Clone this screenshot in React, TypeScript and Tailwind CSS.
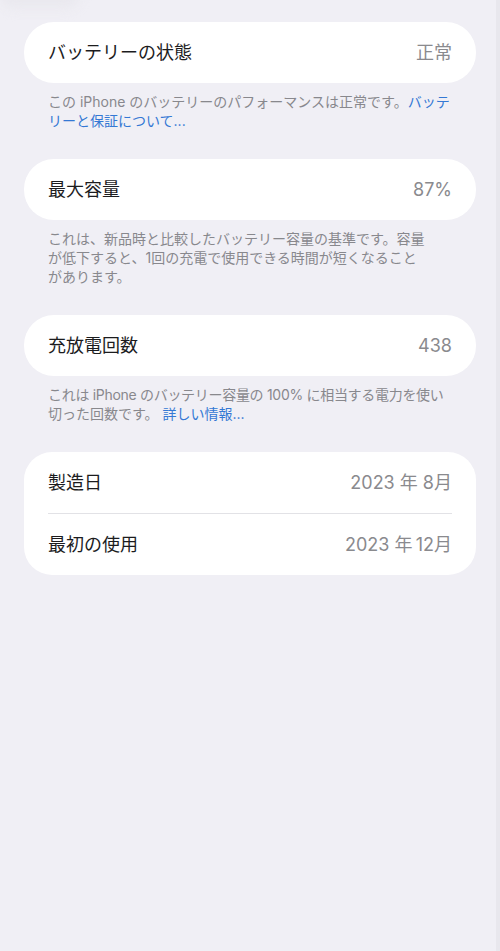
import React from "react";

const font = { fontFamily: 'Inter, "Noto Sans CJK JP", "Noto Sans", sans-serif' };

function Row({ label, value }: { label: string; value: React.ReactNode }) {
  return (
    <div className="flex h-[61px] items-center justify-between">
      <span className="text-[18px] text-[#1c1c1e]">{label}</span>
      <span className="whitespace-nowrap text-[18px] text-[#8a8a8e]">{value}</span>
    </div>
  );
}

function Card({ children }: { children: React.ReactNode }) {
  return <div className="mx-[24px] rounded-[30px] bg-white px-[24px]">{children}</div>;
}

function Note({ children }: { children: React.ReactNode }) {
  return (
    <p className="mx-[48px] mt-[9px] whitespace-nowrap text-[14px] leading-[19px] text-[#88888d]">
      {children}
    </p>
  );
}

export default function App() {
  return (
    <div className="relative h-[951px] w-[500px] overflow-hidden bg-[#f0eff5]" style={font}>
      <div className="absolute left-0 top-[-20px] h-[28px] w-[80px] rounded-full bg-[#e9e8ee] blur-[6px]" />
      <div className="absolute right-0 top-0 h-full w-[4px] bg-[#e8e7ed]" />
      <div className="relative flex flex-col pt-[22px]">
        <Card>
          <Row label="バッテリーの状態" value="正常" />
        </Card>
        <Note>
          この iPhone のバッテリーのパフォーマンスは正常です。
          <span className="text-[#3478d4]">バッテ</span>
          <br />
          <span className="text-[#3478d4]">リーと保証について...</span>
        </Note>
        <div className="h-[29px]" />
        <Card>
          <Row label="最大容量" value="87%" />
        </Card>
        <Note>
          これは、新品時と比較したバッテリー容量の基準です。容量
          <br />
          が低下すると、1回の充電で使用できる時間が短くなること
          <br />
          があります。
        </Note>
        <div className="h-[29px]" />
        <Card>
          <Row label="充放電回数" value="438" />
        </Card>
        <Note>
          <span className="tracking-[-0.3px]">これは iPhone のバッテリー容量の 100% に相当する電力を使い</span>
          <br />
          切った回数です。 <span className="text-[#3478d4]">詳しい情報...</span>
        </Note>
        <div className="h-[29px]" />
        <div className="mx-[24px] rounded-[28px] bg-white px-[24px]">
          <Row label="製造日" value="2023 年 8月" />
          <div className="h-px bg-[#e2e2e6]" />
          <Row label="最初の使用" value={"2023 年\u200912月"} />
        </div>
      </div>
    </div>
  );
}
